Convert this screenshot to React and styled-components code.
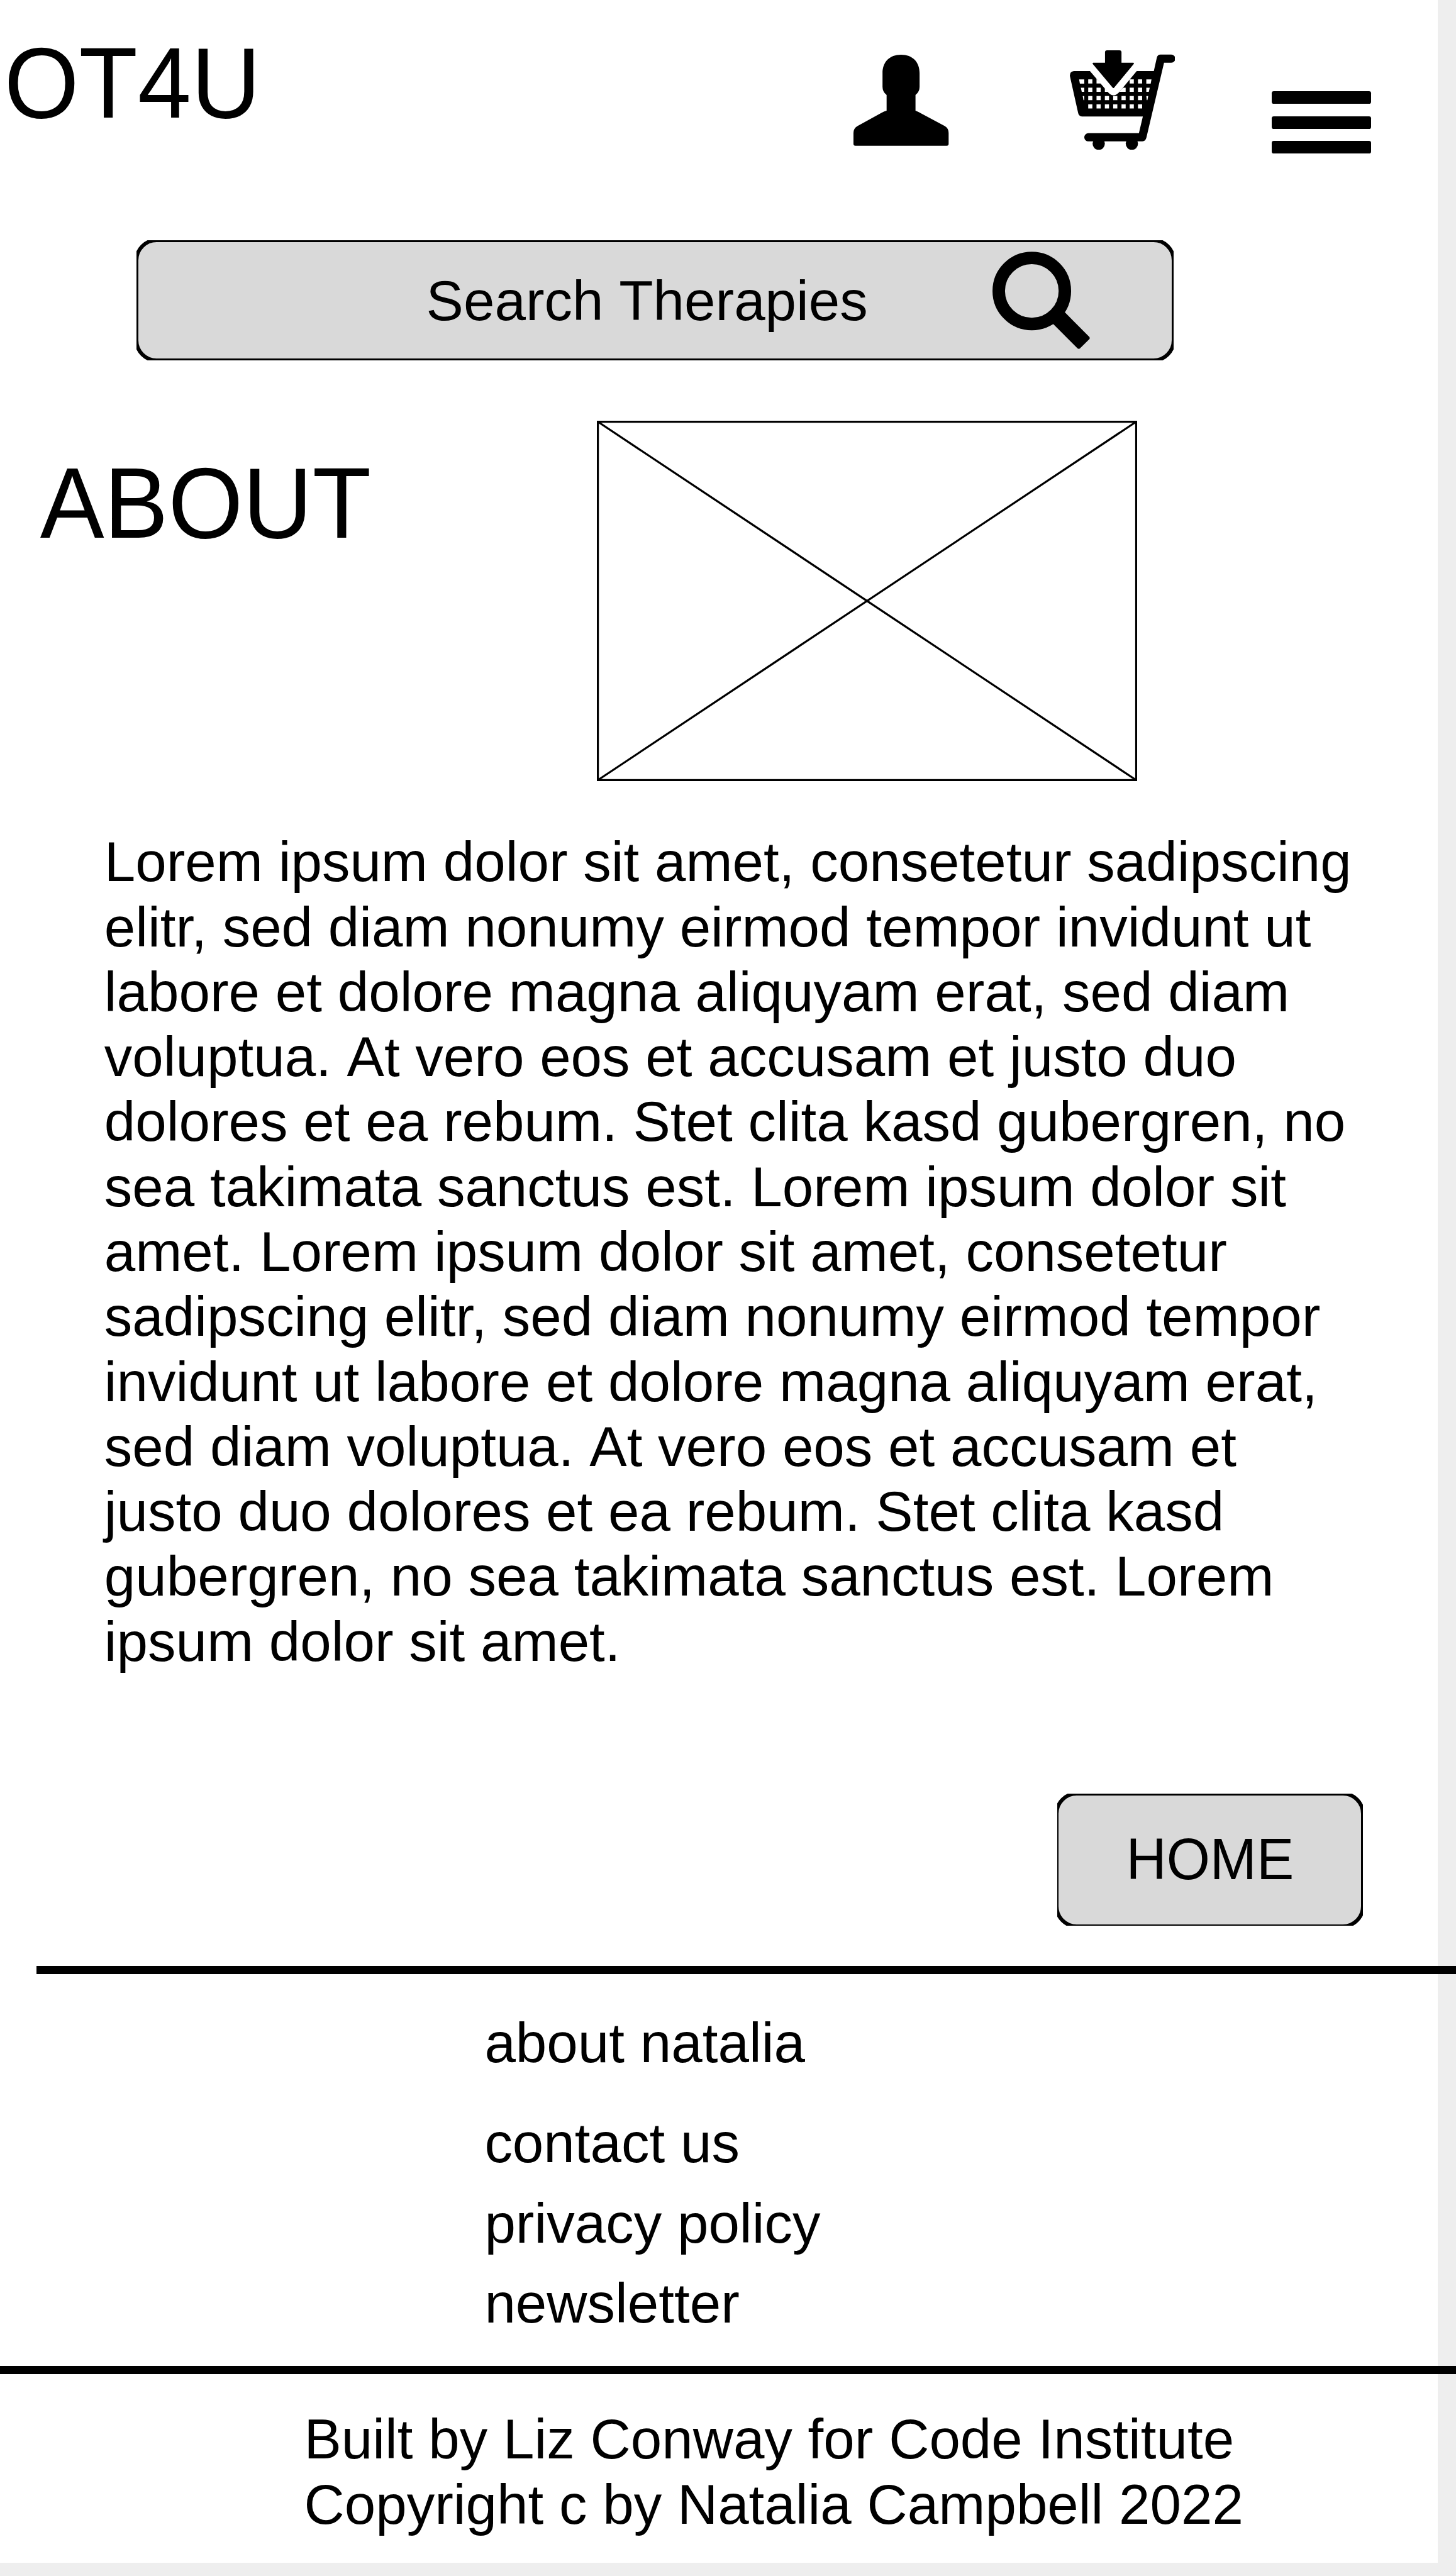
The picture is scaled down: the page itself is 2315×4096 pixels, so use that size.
import React, { Fragment } from "react";
import styled, { createGlobalStyle, css } from "styled-components";

const SCALE = 0.74904;
const u = (n) => `${(n * SCALE).toFixed(3)}px`;

const GlobalStyle = createGlobalStyle`
  html, body { margin: 0; padding: 0; background: #eeeeee; }
  * { box-sizing: border-box; }
`;

const Viewport = styled.div`
  width: 2315px;
  height: 4096px;
  overflow: hidden;
  background: #eeeeee;
  color: #000;
  font-family: "Liberation Sans", Arial, Helvetica, sans-serif;
  font-size: ${u(118.8)};
  line-height: ${u(137.9)};
`;

const Artboard = styled.div`
  display: flex;
  flex-direction: column;
  align-items: flex-start;
  width: ${u(3052)};
  height: ${u(5440)};
  background: #fff;
`;

const Header = styled.header`
  display: flex;
  align-items: flex-start;
  flex: none;
  width: 100%;
  height: ${u(510)};
  padding-left: ${u(9)};
`;

// Capitals are stretched a little so that they stand as tall as Arial's.
const tallCaps = css`
  transform: scaleY(1.04);
  transform-origin: 0 80.2%;
`;

const Title = styled.h1`
  margin: ${(p) => u(p.$top)} 0 0;
  width: ${(p) => u(p.$width)};
  flex: none;
  font-size: ${u(204)};
  line-height: ${u(234)};
  font-weight: 400;
  white-space: nowrap;
  ${tallCaps}
`;

const Icon = styled.svg`
  display: block;
  flex: none;
  width: ${(p) => u(p.$w)};
  height: ${(p) => u(p.$h)};
  margin-top: ${(p) => u(p.$top || 0)};
  margin-right: ${(p) => u(p.$gap || 0)};
`;

const Menu = styled.div`
  display: flex;
  flex-direction: column;
  justify-content: space-between;
  width: ${u(211.3)};
  height: ${u(132)};
  margin-top: ${u(194)};
`;

const MenuBar = styled.span`
  height: ${u(26.6)};
  border-radius: ${u(4.5)};
  background: #000;
`;

const Panel = styled.div`
  position: relative;
  display: flex;
  align-items: flex-start;
  flex: none;
  overflow: hidden;
  width: ${(p) => u(p.$w)};
  height: ${(p) => u(p.$h)};
  margin-left: ${(p) => u(p.$left)};

  /* The outline straddles the panel edge, so its outer half is cut off. */
  &::before {
    content: "";
    position: absolute;
    inset: -${u(4.3)};
    border: ${u(8.6)} solid #000;
    border-radius: ${u(46.6)};
    background: #d9d9d9;
  }
`;

const PanelLabel = styled.span`
  position: relative;
  flex: none;
  width: ${(p) => u(p.$w)};
  margin: ${(p) => u(p.$top)} 0 0 ${(p) => u(p.$left)};
  white-space: nowrap;
  ${(p) => p.$caps && tallCaps}
`;

const PanelIcon = styled(Icon)`
  position: relative;
  align-self: center;
`;

const Hero = styled.section`
  display: flex;
  align-items: flex-start;
  flex: none;
  padding: ${u(128)} 0 0 ${u(85)};
`;

const Copy = styled.p`
  flex: none;
  margin: ${u(103.3)} 0 0 ${u(221.3)};
`;

const Line = styled.span`
  display: block;
  height: ${u(137.9)};
  white-space: nowrap;
`;

const Word = styled.span`
  display: inline-block;
`;

const ButtonRow = styled.div`
  flex: none;
  margin-top: ${u(254)};
`;

const Rule = styled.hr`
  flex: none;
  width: ${(p) => u(3095 - p.$left)};
  height: ${u(17.3)};
  margin: ${(p) => u(p.$top)} 0 0 ${(p) => u(p.$left)};
  border: 0;
  background: #000;
`;

const Links = styled.nav`
  display: flex;
  flex-direction: column;
  flex: none;
  gap: ${u(32.1)};
  margin: ${u(77.6)} 0 0 ${u(1028.5)};
`;

const FooterLink = styled.a`
  height: ${u(137.9)};
  margin-bottom: ${(p) => u(p.$after || 0)};
  white-space: nowrap;
`;

const Credits = styled.footer`
  flex: none;
  margin: ${u(69.5)} 0 0 ${u(645.5)};
`;

const copyLines = [
  "Lorem ipsum dolor sit amet, consetetur sadipscing",
  "elitr, sed diam nonumy eirmod tempor invidunt ut",
  "labore et dolore magna aliquyam erat, sed diam",
  "voluptua. At vero eos et accusam et justo duo",
  "dolores et ea rebum. Stet clita kasd gubergren, no",
  "sea takimata sanctus est. Lorem ipsum dolor sit",
  "amet. Lorem ipsum dolor sit amet, consetetur",
  "sadipscing elitr, sed diam nonumy eirmod tempor",
  "invidunt ut labore et dolore magna aliquyam erat,",
  "sed diam voluptua. At vero eos et accusam et",
  "justo duo dolores et ea rebum. Stet clita kasd",
  "gubergren, no sea takimata sanctus est. Lorem",
  "ipsum dolor sit amet.",
];

const links = [
  { label: "about natalia", after: 43 },
  { label: "contact us" },
  { label: "privacy policy" },
  { label: "newsletter" },
];

// Sets each word on its own so that no kerning is applied across the spaces.
function Words({ text }) {
  return text.split(" ").map((word, i) => (
    <Fragment key={i}>
      {i > 0 && " "}
      <Word>{word}</Word>
    </Fragment>
  ));
}

function UserIcon() {
  return (
    <Icon $w={202} $h={193.5} $top={116} $gap={256.3} viewBox="156 108 606 580.5">
      <path d="M459 108C533 108 577 155 577 225V312Q577 345 551 364V464Q570 471 590 483L738 563Q762 577 762 607V676Q762 688 750 688H168Q156 688 156 676V607Q156 577 181 563L330 480Q350 469 367 464V364Q341 345 341 312V225C341 155 385 108 459 108Z" />
    </Icon>
  );
}

const meshRows = [
  { y: 266, xs: [208, 472, 525] },
  { y: 319, xs: [208, 261, 472, 525] },
  { y: 372, xs: [208, 261, 314, 367, 420, 472, 525] },
  { y: 425, xs: [208, 261, 314, 367, 420, 472, 525] },
];

function CartIcon() {
  return (
    <Icon $w={224} $h={211.3} $top={107} $gap={205} viewBox="91 81 672 634">
      <path d="M117 213H219L332 345Q348 367 369 367Q390 367 407 345L517 213H626L645 128Q650 108 668 108H737A26 26 0 0 1 737 160H691L579 636Q573 661 553 661H209A26 26 0 0 1 209 609H531L556 503H168Q148 501 144 481L91 243Q91 215 117 213Z" />
      <path d="M328 81H407Q420 81 420 94V160H496Q501 162 498 168L372 320Q369 323 365 320L237 168Q234 162 240 160H315V94Q315 81 328 81Z" />
      <circle cx="275" cy="676" r="39" />
      <circle cx="486" cy="676" r="39" />
      <g fill="#fff">
        {meshRows.map((row) =>
          row.xs.map((x) => (
            <rect key={`${x}-${row.y}`} x={x} y={row.y} width="26.5" height="26.5" />
          ))
        )}
        <path d="M150 266H183V293H155ZM578 266H611L606 293H578ZM161 319H183V345H167ZM578 319H600L594 345H578ZM173 372H183V398H178ZM578 372H590L585 398H581ZM261 262V292.5H290ZM314 323V345.5H334ZM429 319H446.5V345.5H407Z" />
      </g>
    </Icon>
  );
}

function SearchIcon() {
  return (
    <PanelIcon $w={207} $h={207} viewBox="140 132 621 621">
      <circle cx="390.5" cy="383" r="210.5" fill="none" stroke="#000" strokeWidth="79.5" />
      <path d="M527 594L682 749Q690 755 697 749L757 690Q762 684 757 676L602 520L560 500L510 560Z" />
    </PanelIcon>
  );
}

function PlaceholderImage() {
  return (
    <Icon $w={1147} $h={765} viewBox="0 0 1147 765" fill="none" stroke="#000">
      <rect x="2.15" y="2.15" width="1142.7" height="760.7" strokeWidth="4.3" />
      <path d="M2 2L1145 763M1145 2L2 763" strokeWidth="4.3" />
    </Icon>
  );
}

export default function App() {
  return (
    <Viewport>
      <GlobalStyle />
      <Artboard>
        <Header>
          <Title $top={62.3} $width={1803}>OT4U</Title>
          <UserIcon />
          <CartIcon />
          <Menu>
            <MenuBar />
            <MenuBar />
            <MenuBar />
          </Menu>
        </Header>

        <Panel $left={289.5} $w={2201.5} $h={255}>
          <PanelLabel $left={615.1} $top={60.7} $w={1202.1}>
            <Words text="Search Therapies" />
          </PanelLabel>
          <SearchIcon />
        </Panel>

        <Hero>
          <Title as="h2" $top={61.3} $width={1182}>ABOUT</Title>
          <PlaceholderImage />
        </Hero>

        <Copy>
          {copyLines.map((line) => (
            <Line key={line}>
              <Words text={line} />
            </Line>
          ))}
        </Copy>

        <ButtonRow>
          <Panel $left={2243.8} $w={649.4} $h={280.7} role="button">
            <PanelLabel $caps $left={146.5} $top={71.8} $w={360}>HOME</PanelLabel>
          </Panel>
        </ButtonRow>

        <Rule $left={77} $top={84.7} />
        <Links>
          {links.map((link) => (
            <FooterLink key={link.label} $after={link.after}>
              <Words text={link.label} />
            </FooterLink>
          ))}
        </Links>

        <Rule $left={0} $top={64.2} />
        <Credits>
          <Line>
            <Words text="Built by Liz Conway for Code Institute" />
          </Line>
          <Line>
            <Words text="Copyright c by Natalia Campbell 2022" />
          </Line>
        </Credits>
      </Artboard>
    </Viewport>
  );
}
